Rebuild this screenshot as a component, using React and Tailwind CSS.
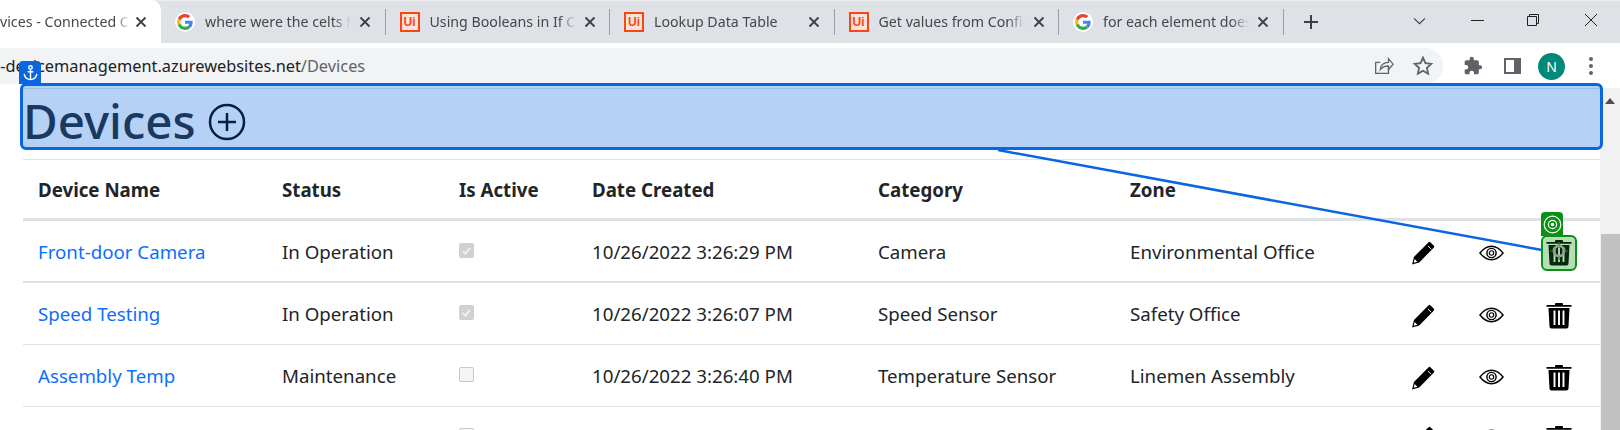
import React from "react";

function GoogleG() {
  return (
    <span className="w-[20px] h-[20px] rounded-full bg-white flex items-center justify-center shrink-0">
      <svg viewBox="0 0 48 48" className="w-[16px] h-[16px]">
        <path fill="#EA4335" d="M24 9.500c3.500 0 6.700 1.200 9.200 3.600l6.900-6.900C35.900 2.400 30.500 0 24 0 14.600 0 6.500 5.400 2.600 13.200l8 6.200C12.500 13.600 17.800 9.500 24 9.500z" />
        <path fill="#4285F4" d="M47 24.500c0-1.600-.1-3.100-.4-4.500H24v9h12.900c-.6 3-2.200 5.500-4.800 7.200l7.700 6C44.300 37.900 47 31.800 47 24.500z" />
        <path fill="#FBBC05" d="M10.600 28.600c-.5-1.400-.8-3-.8-4.600s.3-3.200.8-4.600l-8-6.200C.9 16.500 0 20.100 0 24s.9 7.500 2.600 10.800l8-6.200z" />
        <path fill="#34A853" d="M24 48c6.500 0 11.900-2.100 15.800-5.800l-7.700-6c-2.100 1.400-4.900 2.300-8.100 2.300-6.200 0-11.500-4.100-13.400-9.900l-8 6.200C6.500 42.600 14.600 48 24 48z" />
      </svg>
    </span>
  );
}

function UiPath() {
  return (
    <span className="w-[20px] h-[20px] border-[2px] border-[#fa4616] bg-[#fbe3da] text-[#fa4616] text-[12px] font-bold leading-none flex items-center justify-center shrink-0 font-['Liberation_Sans',sans-serif]">
      Ui
    </span>
  );
}

function X({ className = "" }) {
  return (
    <svg viewBox="0 0 12 12" className={"w-[12px] h-[12px] shrink-0 " + className}>
      <path d="M1.500 1.500L10.500 10.500M10.500 1.500L1.500 10.500" stroke="#3c4043" strokeWidth="1.800" fill="none" />
    </svg>
  );
}

function Tab({ icon, title }) {
  return (
    <div className="w-[224.500px] h-[42px] shrink-0 flex items-center relative pl-[14px]">
      <span className="mr-[10px]">{icon}</span>
      <span className="w-[146px] overflow-hidden whitespace-nowrap text-[14.200px] text-[#45474a] [mask-image:linear-gradient(to_right,black_88%,transparent)]">{title}</span>
      <X className="ml-[8px]" />
      <span className="absolute right-0 top-[8px] w-[1px] h-[26px] bg-[#9aa0a6]" />
    </div>
  );
}

function Pencil() {
  return (
    <svg viewBox="0 0 24 24" className="w-[25px] h-[25px]">
      <path d="M1 23.500l1.800-7.300L16.700 2.300a1.500 1.500 0 0 1 2.100 0l3 3a1.500 1.500 0 0 1 0 2.100L7.900 21.500z" fill="#000" />
      <path d="M2.600 21.900l.9-3.700 2.600 2.700z" fill="#fff" />
      <path d="M16.300 5.700l3.100 3.100" stroke="#fff" strokeWidth="0.900" />
    </svg>
  );
}

function Eye() {
  return (
    <svg viewBox="0 0 26 16" className="w-[25px] h-[16px]">
      <path d="M1 8C5 3 9 1 13 1s8 2 12 7c-4 5-8 7-12 7S5 13 1 8z" fill="none" stroke="#000" strokeWidth="1.500" />
      <circle cx="13" cy="8" r="4.800" fill="none" stroke="#000" strokeWidth="1.500" />
      <circle cx="13" cy="8" r="2.300" fill="none" stroke="#000" strokeWidth="1.200" />
    </svg>
  );
}

function Trash() {
  return (
    <svg viewBox="0 0 26 26" className="w-[26px] h-[27px] -ml-[1px]">
      <path d="M9 2.500V1.500a1 1 0 0 1 1-1h6a1 1 0 0 1 1 1v1h8.500v1.800H.5V2.500z" fill="#000" />
      <path d="M2.500 5.500h21L22.500 24a2 2 0 0 1-2 2h-15a2 2 0 0 1-2-2z" fill="#000" />
      <path d="M8.500 8v14.500M13 8v14.500M17.500 8v14.500" stroke="#fff" strokeWidth="1.900" />
    </svg>
  );
}

const rows = [
  ["Front-door Camera", "In Operation", true, "10/26/2022 3:26:29 PM", "Camera", "Environmental Office", "border-b-[2px] border-[#dee2e6]"],
  ["Speed Testing", "In Operation", true, "10/26/2022 3:26:07 PM", "Speed Sensor", "Safety Office", "border-b border-[#dee2e6]"],
  ["Assembly Temp", "Maintenance", false, "10/26/2022 3:26:40 PM", "Temperature Sensor", "Linemen Assembly", "border-b border-[#dee2e6]"],
];

function Check({ on }) {
  return on ? (
    <span className="w-[15px] h-[15px] rounded-[2px] bg-[#d1d1d1] flex items-center justify-center">
      <svg viewBox="0 0 12 12" className="w-[11px] h-[11px]"><path d="M2 6.500l2.800 2.800L10 3" fill="none" stroke="#f2f2f2" strokeWidth="2" /></svg>
    </span>
  ) : (
    <span className="block w-[15px] h-[15px] rounded-[2px] bg-[#f5f5f5] border border-[#c8c8c8]" />
  );
}

const cols = "grid grid-cols-[244px_177px_133px_286px_252px_281px_68px_68px_68px]";

export default function App() {
  return (
    <div className="w-[1620px] h-[430px] overflow-hidden relative bg-white text-[#212529] font-['Noto_Sans','Open_Sans',sans-serif]">
      <div className="h-[43px] bg-[#dee1e6] border-t border-[#eceef0] flex items-stretch relative">
        <div className="w-[161px] h-[43px] -mt-[1px] bg-white rounded-tr-[10px] shrink-0 flex items-center overflow-hidden">
          <span className="w-[130px] overflow-hidden whitespace-nowrap text-[14.200px] text-[#45474a] [mask-image:linear-gradient(to_right,black_88%,transparent)]">vices - Connected Car</span>
          <X className="ml-[5px]" />
        </div>
        <Tab icon={<GoogleG />} title="where were the celts from" />
        <Tab icon={<UiPath />} title="Using Booleans in If Conditions" />
        <Tab icon={<UiPath />} title="Lookup Data Table" />
        <Tab icon={<UiPath />} title="Get values from Config file" />
        <Tab icon={<GoogleG />} title="for each element does not work" />
        <svg viewBox="0 0 16 16" className="w-[16px] h-[16px] ml-[19px] self-center"><path d="M8 1v14M1 8h14" stroke="#3c4043" strokeWidth="2" /></svg>
        <div className="ml-auto flex items-center h-[38px] pr-[22px]">
          <svg viewBox="0 0 12 12" className="w-[13px] h-[13px] mr-[45px]"><path d="M1 4l5 5 5-5" fill="none" stroke="#3c4043" strokeWidth="1" /></svg>
          <span className="w-[13px] h-[1px] bg-[#222] mr-[42px]" />
          <svg viewBox="0 0 14 14" className="w-[14px] h-[14px] mr-[44px]"><path d="M1.500 3.500h9v9h-9zM3.500 3.500v-2h9v9h-2" fill="none" stroke="#222" strokeWidth="1" /></svg>
          <svg viewBox="0 0 14 14" className="w-[14px] h-[14px]"><path d="M1 1l12 12M13 1L1 13" fill="none" stroke="#222" strokeWidth="1" /></svg>
        </div>
      </div>
      <div className="h-[5px] bg-white" />
      <div className="h-[40px] flex items-center bg-white">
        <div className="w-[1443px] h-[36px] self-start bg-[#f1f3f4] rounded-r-[18px] flex items-center relative">
          <span className="text-[16.350px] whitespace-nowrap text-[#202124] ml-[-9px]">e-devicemanagement.azurewebsites.net<span className="text-[#5f6368]">/Devices</span></span>
          <svg viewBox="0 0 24 24" className="absolute left-[1372px] top-[7px] w-[22px] h-[22px]" fill="none" stroke="#5f6368" strokeWidth="1.400"><path d="M18 14v6H4V8h5" /><path d="M9 16c0-5 4-8 9-8V4l5 6-5 6v-4c-4 0-7 1-9 4z" /></svg>
          <svg viewBox="0 0 24 24" className="absolute left-[1412px] top-[7px] w-[22px] h-[22px]" fill="none" stroke="#5f6368" strokeWidth="2"><path d="M12 3l2.700 6 6.300.7-4.700 4.300 1.300 6.500L12 17.200 6.400 20.500 7.700 14 3 9.700 9.300 9z" /></svg>
        </div>
        <div className="flex items-center self-start h-[36px] ml-[20px]">
          <svg viewBox="0 0 24 24" className="w-[20px] h-[20px]" fill="#5f6368"><path d="M20.500 11H19V7a2 2 0 0 0-2-2h-4V3.500a2.500 2.500 0 0 0-5 0V5H4a2 2 0 0 0-2 2v3.800h1.500a2.700 2.700 0 0 1 0 5.400H2V20a2 2 0 0 0 2 2h3.800v-1.500a2.700 2.700 0 0 1 5.400 0V22H17a2 2 0 0 0 2-2v-4h1.500a2.500 2.500 0 0 0 0-5z" /></svg>
          <span className="w-[17px] h-[16px] border-[2px] border-[#5f6368] border-r-[7px] ml-[21px] bg-white" />
          <span className="w-[27px] h-[27px] rounded-full bg-[#00897b] text-white text-[14px] flex items-center justify-center ml-[17px]">N</span>
          <span className="flex flex-col gap-[3px] ml-[24px]">
            <span className="w-[4px] h-[4px] rounded-full bg-[#5f6368]" />
            <span className="w-[4px] h-[4px] rounded-full bg-[#5f6368]" />
            <span className="w-[4px] h-[4px] rounded-full bg-[#5f6368]" />
          </span>
        </div>
      </div>

      <div className="flex">
        <div className="w-[1600px] pl-[23px] shrink-0">
          <div className="border-t border-[#dee2e6] h-[71px] flex items-center pb-[6px]">
            <h1 className="text-[47.500px] leading-none text-[#212529] font-medium">Devices</h1>
            <svg viewBox="0 0 38 38" className="w-[38px] h-[38px] ml-[12px] mt-[2px]" fill="none" stroke="#000" strokeWidth="2.500"><circle cx="19" cy="19" r="17" /><path d="M19 10v18M10 19h18" /></svg>
          </div>
          <div className={cols + " h-[62px] items-center text-[18.700px] font-bold border-t border-b-[3px] border-[#dee2e6] pl-[15px] pt-[2px]"}>
            <span>Device Name</span><span>Status</span><span>Is Active</span><span>Date Created</span><span>Category</span><span>Zone</span>
          </div>
          {rows.map((r) => (
            <div key={r[0]} className={cols + " h-[62px] items-center text-[18.700px] pl-[15px] pt-[2px] " + r[6]}>
              <span className="text-[#0d6efd] whitespace-nowrap">{r[0]}</span>
              <span>{r[1]}</span>
              <span className="-mt-[4px]"><Check on={r[2]} /></span>
              <span className="whitespace-nowrap">{r[3]}</span>
              <span className="whitespace-nowrap">{r[4]}</span>
              <span className="whitespace-nowrap">{r[5]}</span>
              <span className="pt-[1px]"><Pencil /></span>
              <span className="pt-[1px]"><Eye /></span>
              <span className="pt-[1px]"><Trash /></span>
            </div>
          ))}
          <div className={cols + " h-[40px] pl-[15px]"}>
            <span /><span /><span className="pt-[21px]"><Check on={false} /></span><span /><span /><span />
            <span className="pt-[18px]"><Pencil /></span><span className="pt-[22px]"><Eye /></span><span className="pt-[18px]"><Trash /></span>
          </div>
        </div>
        <div className="w-[20px] h-[345px] bg-[#f1f1f1] relative flex flex-col">
          <svg viewBox="0 0 10 6" className="w-[10px] h-[6px] ml-[5px] mt-[10px]"><path d="M0 6l5-6 5 6z" fill="#505050" /></svg>
          <div className="ml-[1px] w-[19px] h-[200px] mt-[130px] bg-[#c1c1c1]" />
        </div>
      </div>

      {/* UiPath selection overlays */}
      <div className="absolute left-[20px] top-[83px] w-[1583px] h-[67px] border-[3px] border-[#0a66e0] rounded-[6px] bg-[#0a66e0]/30" />
      <div className="absolute left-[19px] top-[61px] w-[22px] h-[23px] bg-[#0a66e0] rounded-t-[4px] flex items-center justify-center">
        <svg viewBox="0 0 24 24" className="w-[17px] h-[17px]" fill="none" stroke="#fff" strokeWidth="2"><circle cx="12" cy="5" r="2.500" /><path d="M12 8v14M8 11h8M3 14c1 5 5 8 9 8s8-3 9-8" /></svg>
      </div>
      <svg className="absolute left-0 top-0 w-[1620px] h-[430px] pointer-events-none" viewBox="0 0 1620 430"><path d="M998 150L1542 250" stroke="#0a66e0" strokeWidth="2.500" fill="none" /></svg>
      <div className="absolute left-[1541px] top-[212px] w-[22px] h-[24px] bg-[#0a9113] rounded-t-[4px] flex items-center justify-center">
        <svg viewBox="0 0 16 16" className="w-[19px] h-[19px]" fill="none" stroke="#fff" strokeWidth="1"><circle cx="8" cy="8" r="7" /><circle cx="8" cy="8" r="3.500" /><circle cx="8" cy="8" r="1" fill="#fff" /></svg>
      </div>
      <div className="absolute left-[1541px] top-[235px] w-[36px] h-[36px] border-[2px] border-[#0a9113] rounded-[6px] bg-[#0a9113]/30 flex items-center justify-center">
        <svg viewBox="0 0 16 16" className="w-[18px] h-[18px] -mt-[4px]" fill="none"><circle cx="8" cy="8" r="4.500" stroke="#9a9a9a" strokeWidth="2.500" /><path d="M8 0v3M8 13v3M0 8h3M13 8h3" stroke="#0a9113" strokeWidth="1" /></svg>
      </div>
    </div>
  );
}
